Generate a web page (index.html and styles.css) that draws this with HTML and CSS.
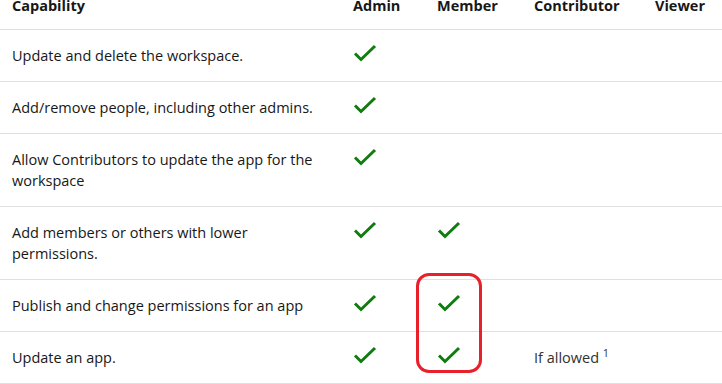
FILE: index.html
```html
<!DOCTYPE html>
<html lang="en">
<head>
    <meta charset="UTF-8">
    <title>Workspace roles</title>
    <link rel="stylesheet" href="styles.css">
</head>
<body>
    <div class="table-wrapper">
        <table class="permissions">
            <colgroup>
                <col class="col-capability">
                <col class="col-admin">
                <col class="col-member">
                <col class="col-contributor">
                <col>
            </colgroup>
            <thead>
                <tr>
                    <th>Capability</th>
                    <th>Admin</th>
                    <th>Member</th>
                    <th>Contributor</th>
                    <th>Viewer</th>
                </tr>
            </thead>
            <tbody>
                <tr>
                    <td>Update and delete the workspace.</td>
                    <td><svg class="check" viewBox="0 0 24 18"><polyline points="2,9.5 8,15.5 22,2"/></svg></td>
                    <td></td>
                    <td></td>
                    <td></td>
                </tr>
                <tr>
                    <td>Add/remove people, including other admins.</td>
                    <td><svg class="check" viewBox="0 0 24 18"><polyline points="2,9.5 8,15.5 22,2"/></svg></td>
                    <td></td>
                    <td></td>
                    <td></td>
                </tr>
                <tr>
                    <td>Allow Contributors to update the app for the workspace</td>
                    <td><svg class="check" viewBox="0 0 24 18"><polyline points="2,9.5 8,15.5 22,2"/></svg></td>
                    <td></td>
                    <td></td>
                    <td></td>
                </tr>
                <tr>
                    <td>Add members or others with lower permissions.</td>
                    <td><svg class="check" viewBox="0 0 24 18"><polyline points="2,9.5 8,15.5 22,2"/></svg></td>
                    <td><svg class="check" viewBox="0 0 24 18"><polyline points="2,9.5 8,15.5 22,2"/></svg></td>
                    <td></td>
                    <td></td>
                </tr>
                <tr>
                    <td>Publish and change permissions for an app</td>
                    <td><svg class="check" viewBox="0 0 24 18"><polyline points="2,9.5 8,15.5 22,2"/></svg></td>
                    <td><svg class="check" viewBox="0 0 24 18"><polyline points="2,9.5 8,15.5 22,2"/></svg></td>
                    <td></td>
                    <td></td>
                </tr>
                <tr>
                    <td>Update an app.</td>
                    <td><svg class="check" viewBox="0 0 24 18"><polyline points="2,9.5 8,15.5 22,2"/></svg></td>
                    <td><svg class="check" viewBox="0 0 24 18"><polyline points="2,9.5 8,15.5 22,2"/></svg></td>
                    <td class="note">If allowed <sup>1</sup></td>
                    <td></td>
                </tr>
            </tbody>
        </table>
        <!-- 标注框 -->
        <div class="highlight"></div>
    </div>
</body>
</html>
```

FILE: styles.css
```css
:root {
    --text-color: #171717;
    --border-color: #e1dfdd;
    --check-color: #107c10;
    --mark-color: #e8202a;
}

body {
    margin: 0;
    font-family: 'Open Sans', 'Noto Sans', Arial, sans-serif;
    font-size: 14.5px;
    color: var(--text-color);
    background: white;
    overflow: hidden;
}

.table-wrapper {
    position: relative;
}

.permissions {
    width: 740px;
    margin-top: -5px;
    border-collapse: collapse;
    table-layout: fixed;
}

.col-capability { width: 341px; }
.col-admin { width: 84px; }
.col-member { width: 97px; }
.col-contributor { width: 121px; }

.permissions th {
    text-align: left;
    font-weight: 700;
    line-height: 21px;
    padding: 0 12px 13px;
    border-bottom: 1px solid var(--border-color);
}

.permissions td {
    vertical-align: top;
    line-height: 21px;
    padding: 15px 12px;
    border-bottom: 1px solid var(--border-color);
}

.check {
    display: block;
    width: 24px;
    height: 18px;
    margin-top: -1px;
    fill: none;
    stroke: var(--check-color);
    stroke-width: 3;
}

.note {
    color: #323130;
}

.note sup {
    font-size: 0.75em;
    line-height: 0;
}

.highlight {
    position: absolute;
    left: 416px;
    top: 278px;
    width: 60px;
    height: 94px;
    border: 3px solid var(--mark-color);
    border-radius: 13px;
}
```
